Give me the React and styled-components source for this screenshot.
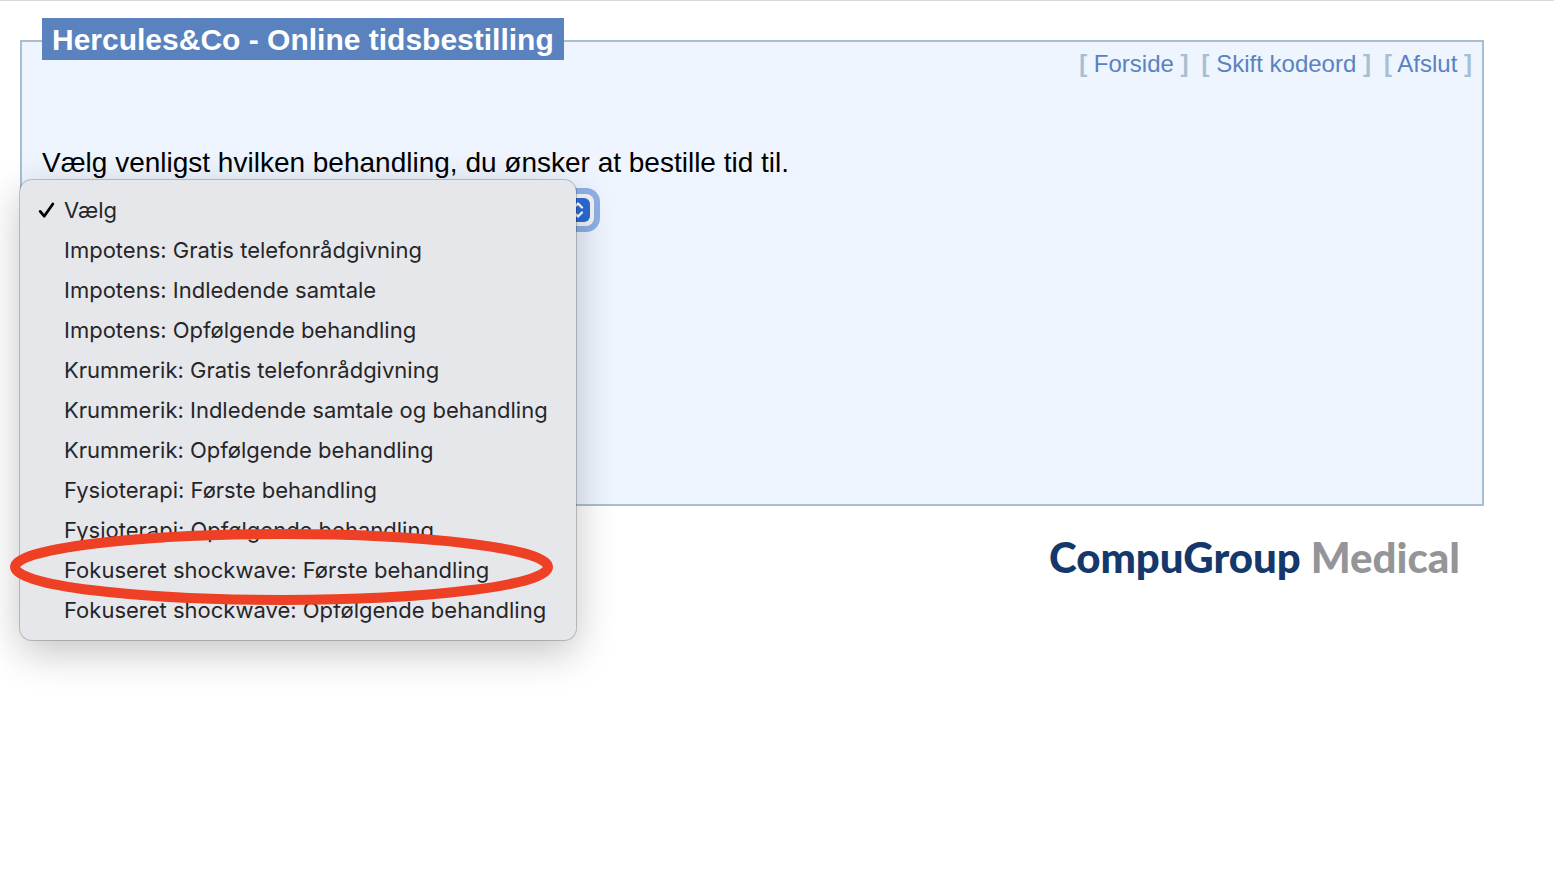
import React, {useState} from "react"
import styled, {createGlobalStyle} from "styled-components"

const colors = {
	blue: "#5a82bf",
	border: "#a8bfd1",
	panel: "#eef5ff",
	menu: "#e6e7eb",
	marker: "#ed4024",
}

const links = ["Forside", "Skift kodeord", "Afslut"]

const treatments = [
	{label: "Vælg"},
	{label: "Impotens: Gratis telefonrådgivning"},
	{label: "Impotens: Indledende samtale"},
	{label: "Impotens: Opfølgende behandling"},
	{label: "Krummerik: Gratis telefonrådgivning"},
	{label: "Krummerik: Indledende samtale og behandling"},
	{label: "Krummerik: Opfølgende behandling"},
	{label: "Fysioterapi: Første behandling"},
	{label: "Fysioterapi: Opfølgende behandling"},
	{label: "Fokuseret shockwave: Første behandling", marked: true},
	{label: "Fokuseret shockwave: Opfølgende behandling"},
]

const App = () => {
	const [selected, setSelected] = useState("Vælg")

	return (
		<>
			<GlobalStyle/>
			<Page>
				<Panel>
					<Header>
						<Title>Hercules&amp;Co - Online tidsbestilling</Title>
						<Nav>
							{links.map(link => (
								<NavItem key={link}>
									<b>[</b> <a href="#">{link}</a> <b>]</b>
								</NavItem>
							))}
						</Nav>
					</Header>
					<Intro htmlFor="treatment">Vælg venligst hvilken behandling, du ønsker at bestille tid til.</Intro>
					<Field>
						<Select id="treatment" value={selected} onChange={e => setSelected(e.target.value)}>
							{treatments.map(({label}) => <option key={label}>{label}</option>)}
						</Select>
						<Arrows viewBox="0 0 24 24" aria-hidden="true">
							<rect width="24" height="24" rx="6" fill="#2a6bd9"/>
							<path d="M8 9.5l4-4 4 4M8 14.5l4 4 4-4"/>
						</Arrows>
						<Menu role="listbox" aria-label="Behandling">
							{treatments.map(({label, marked}) => (
								<Option
									key={label}
									type="button"
									role="option"
									aria-selected={label === selected}
									onClick={() => setSelected(label)}
								>
									{label === selected &&
										<Check viewBox="0 0 18 18" aria-hidden="true">
											<path d="M2.2 10.4l4 4.8L14.8 3"/>
										</Check>
									}
									{label}
									{marked &&
										<Marker viewBox="0 0 544 76" aria-hidden="true">
											<ellipse cx="271.5" cy="38" rx="266.5" ry="33"/>
										</Marker>
									}
								</Option>
							))}
						</Menu>
					</Field>
				</Panel>
				<Footer>
					<Logo>CompuGroup <span>Medical</span></Logo>
				</Footer>
			</Page>
		</>
	)
}

export default App

const GlobalStyle = createGlobalStyle`
	* {
		box-sizing: border-box;
	}
	body {
		margin: 0;
		background: #fff;
		color: #000;
		font-family: "Liberation Sans", Arial, sans-serif;
	}
`

const Page = styled.main`
	min-height: 100vh;
	border-top: 1px solid #d9d9d9;
	padding: 39px 70px 30px 20px;
`

const Panel = styled.section`
	border: 2px solid ${colors.border};
	background: ${colors.panel};
	padding: 0 10px 278px 20px;
`

const Header = styled.header`
	display: flex;
	justify-content: space-between;
	align-items: flex-start;
`

const Title = styled.h1`
	margin: -24px 0 0;
	padding: 2px 10px 0;
	background: ${colors.blue};
	color: #fff;
	font-size: 30px;
	line-height: 40px;
`

const Nav = styled.nav`
	display: flex;
	gap: 13px;
	padding-top: 8px;
	font-size: 24px;
	line-height: 28px;
`

const NavItem = styled.span`
	color: ${colors.border};
	white-space: nowrap;
	& a {
		color: ${colors.blue};
		text-decoration: none;
	}
`

const Intro = styled.label`
	display: block;
	margin-top: 69px;
	font-size: 28px;
	line-height: 32px;
`

const Field = styled.div`
	position: relative;
	width: 552px;
	max-width: 100%;
	margin-top: 15px;
`

const Select = styled.select`
	display: block;
	width: 100%;
	height: 32px;
	padding: 0 36px 0 12px;
	appearance: none;
	border: 0;
	border-radius: 8px;
	background: #f4f4f5;
	box-shadow: 0 0 0 6px #8fb0e8;
	font-family: Inter, sans-serif;
	font-size: 22px;
	outline: none;
`

const Arrows = styled.svg`
	position: absolute;
	top: 4px;
	right: 4px;
	width: 24px;
	height: 24px;
	pointer-events: none;
	& path {
		fill: none;
		stroke: #fff;
		stroke-width: 2.4;
		stroke-linecap: round;
		stroke-linejoin: round;
	}
`

const Menu = styled.div`
	position: absolute;
	top: -14px;
	left: -22px;
	width: 556px;
	padding: 10px 0;
	border-radius: 12px;
	background: ${colors.menu};
	box-shadow: 0 0 0 1px rgba(0, 0, 0, 0.2), 0 12px 40px rgba(0, 0, 0, 0.24);
`

const Option = styled.button`
	position: relative;
	display: block;
	width: 100%;
	padding: 0 0 0 44px;
	border: 0;
	background: none;
	color: #262628;
	font-family: Inter, sans-serif;
	font-size: 22px;
	line-height: 40px;
	text-align: left;
	white-space: nowrap;
`

const Check = styled.svg`
	position: absolute;
	top: 11px;
	left: 18px;
	width: 18px;
	height: 18px;
	& path {
		fill: none;
		stroke: #000;
		stroke-width: 2.8;
		stroke-linecap: round;
		stroke-linejoin: round;
	}
`

const Marker = styled.svg`
	position: absolute;
	z-index: 1;
	top: -21px;
	left: -10px;
	width: 544px;
	height: 76px;
	pointer-events: none;
	& ellipse {
		fill: none;
		stroke: ${colors.marker};
		stroke-width: 10;
	}
`

const Footer = styled.footer`
	display: flex;
	justify-content: flex-end;
	padding: 28px 24px 0;
`

const Logo = styled.div`
	color: #14386b;
	font-family: Lato, sans-serif;
	font-size: 42px;
	font-weight: 900;
	line-height: 46px;
	& span {
		color: #939598;
	}
`
